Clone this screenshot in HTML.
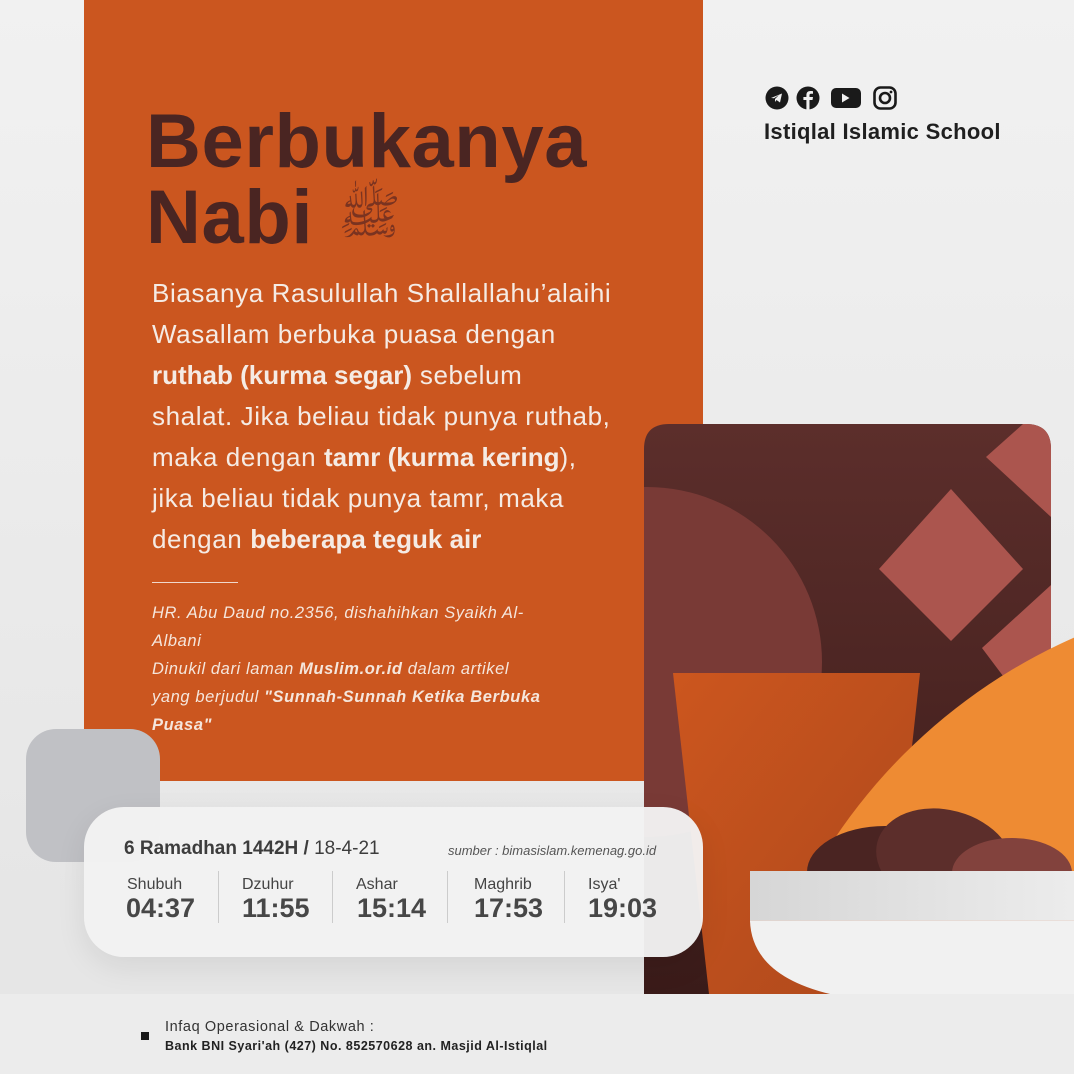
<!DOCTYPE html>
<html style="overflow:hidden"><head><meta charset="utf-8"><style>
*{margin:0;padding:0;box-sizing:border-box}
html,body{width:1074px;height:1074px;overflow:hidden}
body{position:relative;background:linear-gradient(#f1f1f1,#e6e6e6 85%);font-family:"Liberation Sans",sans-serif}
.abs{position:absolute;white-space:nowrap}
.orange{left:84px;top:0;width:619px;height:781px;background:#cb561f;border-radius:0 0 36px 36px}
.grey{left:26px;top:729px;width:134px;height:133px;background:#c0c1c5;border-radius:30px}
.title{left:146px;font-weight:bold;font-size:76px;color:#4a2522;letter-spacing:0.6px}
.body{left:152px;font-size:26px;color:#f5ebe4;letter-spacing:0.6px}
.body b{font-weight:bold;letter-spacing:0}
.cite{left:152px;font-size:16.5px;font-style:italic;color:#f5e6dc;letter-spacing:0.6px}
.card{left:84px;top:807px;width:619px;height:150px;background:rgba(243,243,243,.96);border-radius:40px;box-shadow:0 10px 30px rgba(0,0,0,.08)}
.lbl{font-size:16px;color:#444}
.tm{font-size:27px;font-weight:bold;color:#474747}
.sep{position:absolute;top:871px;width:1px;height:52px;background:#ccc}
</style></head><body>
<div class="abs orange"></div>
<div class="abs grey"></div>

<svg class="abs" style="left:0;top:0" width="1074" height="1074">
<defs>
<clipPath id="pan"><path d="M669 424H1026Q1051 424 1051 449V994H644V449Q644 424 669 424Z"/></clipPath>
<linearGradient id="bg" x1="0" y1="0" x2="0" y2="1"><stop offset="0" stop-color="#5c2e2b"/><stop offset="1" stop-color="#3a1b19"/></linearGradient>
<linearGradient id="cup" x1="0" y1="0" x2="1" y2="1"><stop offset="0" stop-color="#cc561e"/><stop offset="1" stop-color="#ad481c"/></linearGradient>
<linearGradient id="rim" x1="0" x2="1"><stop offset="0" stop-color="#d6d6d6"/><stop offset="1" stop-color="#ececec"/></linearGradient>
<clipPath id="cl"><rect x="0" y="0" width="1074" height="994"/></clipPath>
<clipPath id="oc"><polygon points="0,0 1074,0 1074,994 850,994 850,921 0,921"/></clipPath>
</defs>
<g clip-path="url(#pan)">
<rect x="644" y="424" width="407" height="570" fill="url(#bg)"/>
<circle cx="647" cy="662" r="175" fill="#793a36"/>
<polygon points="951,489 1023,569 951,641 879,569" fill="#ab554e"/>
<polygon points="986,457 1023,424 1051,424 1051,517" fill="#ab554e"/>
<polygon points="982,648 1051,585 1051,740" fill="#ab554e"/>
</g>
<polygon points="673,673 920,673 885,994 709,994" fill="url(#cup)"/>
<g clip-path="url(#cl)">
<circle cx="1300" cy="1150" r="560" fill="#ee8b33" clip-path="url(#oc)"/>
<ellipse cx="885" cy="872" rx="78" ry="46" fill="#4a2422"/>
<ellipse cx="945" cy="860" rx="70" ry="50" transform="rotate(15 945 860)" fill="#5c2e2b"/>
<ellipse cx="1012" cy="873" rx="60" ry="35" fill="#82423d"/>
<rect x="750" y="871" width="324" height="50" fill="url(#rim)"/>
<line x1="750" y1="921" x2="1074" y2="921" stroke="#e8d2c8" stroke-width="1"/>
<path d="M750 921H1074V994H830Q752 975 750 921Z" fill="#f1f1f1"/>
</g>
</svg>

<div class="abs title" style="top:100px;line-height:84px">Berbukanya</div>
<div class="abs title" style="top:176px;line-height:84px">Nabi</div>
<div class="abs" style="left:338px;top:184px;font-size:52px;color:#7a3320;font-family:'DejaVu Sans',sans-serif">ﷺ</div>

<div class="abs body" style="top:278px">Biasanya Rasulullah Shallallahu’alaihi</div>
<div class="abs body" style="top:319px">Wasallam berbuka puasa dengan</div>
<div class="abs body" style="top:360px"><b>ruthab (kurma segar)</b> sebelum</div>
<div class="abs body" style="top:401px">shalat. Jika beliau tidak punya ruthab,</div>
<div class="abs body" style="top:442px">maka dengan <b>tamr (kurma kering</b>),</div>
<div class="abs body" style="top:483px">jika beliau tidak punya tamr, maka</div>
<div class="abs body" style="top:524px">dengan <b>beberapa teguk air</b></div>
<div class="abs" style="left:152px;top:582px;width:86px;height:1px;background:#f0d8cc"></div>
<div class="abs cite" style="top:604px">HR. Abu Daud no.2356, dishahihkan Syaikh Al-</div>
<div class="abs cite" style="top:632px">Albani</div>
<div class="abs cite" style="top:660px">Dinukil dari laman <b>Muslim.or.id</b> dalam artikel</div>
<div class="abs cite" style="top:688px">yang berjudul <b>"Sunnah-Sunnah Ketika Berbuka</b></div>
<div class="abs cite" style="top:716px"><b>Puasa"</b></div>

<svg class="abs" style="left:765px;top:86px" width="135" height="24">
<circle cx="12" cy="12" r="11.5" fill="#1a1a1a"/>
<path d="M6 12l11-4.5-2 9-3.5-2.5-1.5 2v-3l4-4-5 3.3z" fill="#f0f0f0"/>
<circle cx="43" cy="12" r="11.5" fill="#1a1a1a"/>
<path d="M44.5 24V14h3l.5-3h-3.5V9.3c0-1 .4-1.5 1.5-1.5h2V5.2c-.5-.1-1.5-.2-2.6-.2-2.5 0-4 1.4-4 4.1V11h-3v3h3v10z" fill="#f0f0f0"/>
<rect x="66" y="2" width="30" height="20" rx="5" fill="#1a1a1a"/>
<path d="M77 7.5v9l7.5-4.5z" fill="#f0f0f0"/>
<rect x="109.5" y="1.5" width="21" height="21" rx="6" fill="none" stroke="#1a1a1a" stroke-width="2.6"/>
<circle cx="120" cy="12" r="5" fill="none" stroke="#1a1a1a" stroke-width="2.6"/>
<circle cx="126" cy="6" r="1.4" fill="#1a1a1a"/>
</svg>
<div class="abs" style="left:764px;top:119px;font-size:22px;font-weight:bold;color:#1f1f1f;letter-spacing:0.3px">Istiqlal Islamic School</div>

<div class="abs card"></div>
<div class="abs" style="left:124px;top:838px;font-size:19px;color:#3d3d3d"><b>6 Ramadhan 1442H</b> <b>/</b> 18-4-21</div>
<div class="abs" style="left:448px;top:843px;font-size:13px;font-style:italic;color:#555">sumber : bimasislam.kemenag.go.id</div>
<div class="abs lbl" style="left:127px;top:876px">Shubuh</div>
<div class="abs lbl" style="left:242px;top:876px">Dzuhur</div>
<div class="abs lbl" style="left:356px;top:876px">Ashar</div>
<div class="abs lbl" style="left:474px;top:876px">Maghrib</div>
<div class="abs lbl" style="left:588px;top:876px">Isya'</div>
<div class="abs tm" style="left:126px;top:893px">04:37</div>
<div class="abs tm" style="left:242px;top:893px">11:55</div>
<div class="abs tm" style="left:357px;top:893px">15:14</div>
<div class="abs tm" style="left:474px;top:893px">17:53</div>
<div class="abs tm" style="left:588px;top:893px">19:03</div>
<div class="sep" style="left:218px"></div>
<div class="sep" style="left:332px"></div>
<div class="sep" style="left:447px"></div>
<div class="sep" style="left:564px"></div>

<div class="abs" style="left:0;top:994px;width:1074px;height:80px;background:#ececec"></div>
<div class="abs" style="left:141px;top:1032px;width:8px;height:8px;background:#1a1a1a"></div>
<div class="abs" style="left:165px;top:1019px;font-size:14.5px;color:#333;letter-spacing:0.6px">Infaq Operasional &amp; Dakwah :</div>
<div class="abs" style="left:165px;top:1039px;font-size:12.5px;font-weight:bold;color:#222;letter-spacing:0.5px">Bank BNI Syari'ah (427) No. 852570628 an. Masjid Al-Istiqlal</div>
</body></html>
